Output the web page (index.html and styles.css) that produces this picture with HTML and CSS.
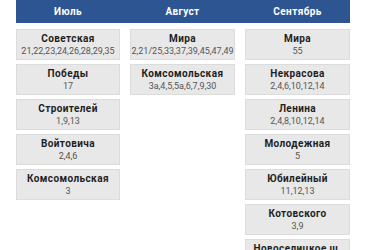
FILE: index.html
```html
<!DOCTYPE html>
<html lang="ru">
<head>
<meta charset="utf-8">
<link rel="stylesheet" href="styles.css">
</head>
<body>
<div class="page">
  <div class="head">
    <div class="head-cell">Июль</div>
    <div class="head-cell">Август</div>
    <div class="head-cell">Сентябрь</div>
  </div>
  <div class="cols">
    <div class="col">
      <div class="card"><div class="name">Советская</div><div class="nums">21,22,23,24,26,28,29,35</div></div>
      <div class="card"><div class="name">Победы</div><div class="nums">17</div></div>
      <div class="card"><div class="name">Строителей</div><div class="nums">1,9,13</div></div>
      <div class="card"><div class="name">Войтовича</div><div class="nums">2,4,6</div></div>
      <div class="card"><div class="name">Комсомольская</div><div class="nums">3</div></div>
    </div>
    <div class="col">
      <div class="card"><div class="name">Мира</div><div class="nums">2,21/25,33,37,39,45,47,49</div></div>
      <div class="card"><div class="name">Комсомольская</div><div class="nums">3а,4,5,5а,6,7,9,30</div></div>
    </div>
    <div class="col">
      <div class="card"><div class="name">Мира</div><div class="nums">55</div></div>
      <div class="card"><div class="name">Некрасова</div><div class="nums">2,4,6,10,12,14</div></div>
      <div class="card"><div class="name">Ленина</div><div class="nums">2,4,8,10,12,14</div></div>
      <div class="card"><div class="name">Молодежная</div><div class="nums">5</div></div>
      <div class="card"><div class="name">Юбилейный</div><div class="nums">11,12,13</div></div>
      <div class="card"><div class="name">Котовского</div><div class="nums">3,9</div></div>
      <div class="card"><div class="name">Новоселицкое ш.</div><div class="nums">1</div></div>
    </div>
  </div>
</div>
</body>
</html>
```

FILE: styles.css
```css
html, body {
  margin: 0;
  padding: 0;
  background: #ffffff;
  font-family: Roboto, "Liberation Sans", sans-serif;
  overflow: hidden;
}
.page {
  width: 334px;
  padding: 0 16px;
}
.head {
  display: grid;
  grid-template-columns: 104px 105px 105px;
  column-gap: 10px;
  height: 23px;
  background: #2c5592;
  align-items: center;
}
.head-cell {
  color: #ffffff;
  font-weight: bold;
  font-size: 10px;
  letter-spacing: 0.4px;
  text-align: center;
}
.cols {
  display: grid;
  grid-template-columns: 104px 105px 105px;
  column-gap: 10px;
  margin-top: 6px;
  align-items: start;
}
.col {
  display: flex;
  flex-direction: column;
  gap: 4px;
}
.card {
  box-sizing: border-box;
  height: 31px;
  background: #e8e8e8;
  border: 1px solid #dcdcdc;
  padding-top: 2px;
  text-align: center;
  white-space: nowrap;
}
.name {
  font-size: 10px;
  font-weight: bold;
  letter-spacing: 0.4px;
  color: #1e1e1e;
  line-height: 13px;
}
.nums {
  font-size: 9px;
  color: #555555;
  line-height: 12px;
}
```
